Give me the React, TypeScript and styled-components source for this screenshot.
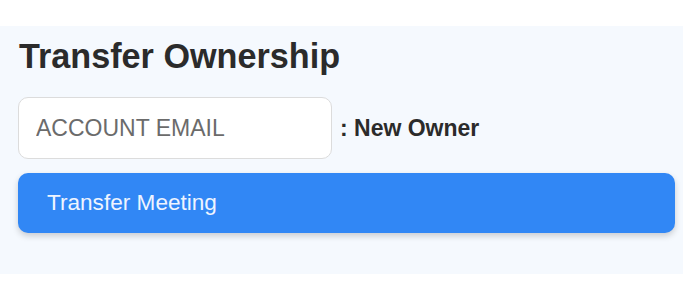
import styled, { createGlobalStyle } from "styled-components";

const Global = createGlobalStyle`
  body {
    margin: 0;
    background: #fff;
    font-family: "Liberation Sans", Arial, sans-serif;
  }
`;

const Panel = styled.section`
  margin-top: 26px;
  height: 248px;
  box-sizing: border-box;
  padding: 11px 8px 0 18px;
  background: #f5f9fe;
  display: flex;
  flex-direction: column;
`;

const Title = styled.h2`
  margin: 0 0 21px 1px;
  font-size: 34.2px;
  font-weight: 700;
  line-height: 39px;
  color: #2b2b2b;
`;

const Row = styled.div`
  display: flex;
  align-items: center;
  gap: 8px;
  margin-bottom: 14px;
`;

const EmailInput = styled.input`
  width: 314px;
  height: 62px;
  box-sizing: border-box;
  padding: 0 17px;
  border: 1px solid #dcdcdc;
  border-radius: 10px;
  background: #fff;
  font-family: inherit;
  font-size: 23px;
  color: #333;
  outline: none;

  &::placeholder {
    color: #6b6b6b;
  }
`;

const Label = styled.span`
  font-size: 23px;
  font-weight: 700;
  color: #2b2b2b;
  margin-top: 1px;
`;

const Button = styled.button`
  width: 657px;
  height: 60px;
  box-sizing: border-box;
  padding: 0 29px;
  border: none;
  border-radius: 10px;
  background: #3187f5;
  color: #eef4ff;
  font-family: inherit;
  font-size: 22.6px;
  text-align: left;
  box-shadow: 0 3px 6px rgba(0, 0, 0, 0.18);
  cursor: pointer;
`;

export default function App() {
  return (
    <>
      <Global />
      <Panel>
        <Title>Transfer Ownership</Title>
        <Row>
          <EmailInput type="email" placeholder="ACCOUNT EMAIL" />
          <Label>: New Owner</Label>
        </Row>
        <Button>Transfer Meeting</Button>
      </Panel>
    </>
  );
}
